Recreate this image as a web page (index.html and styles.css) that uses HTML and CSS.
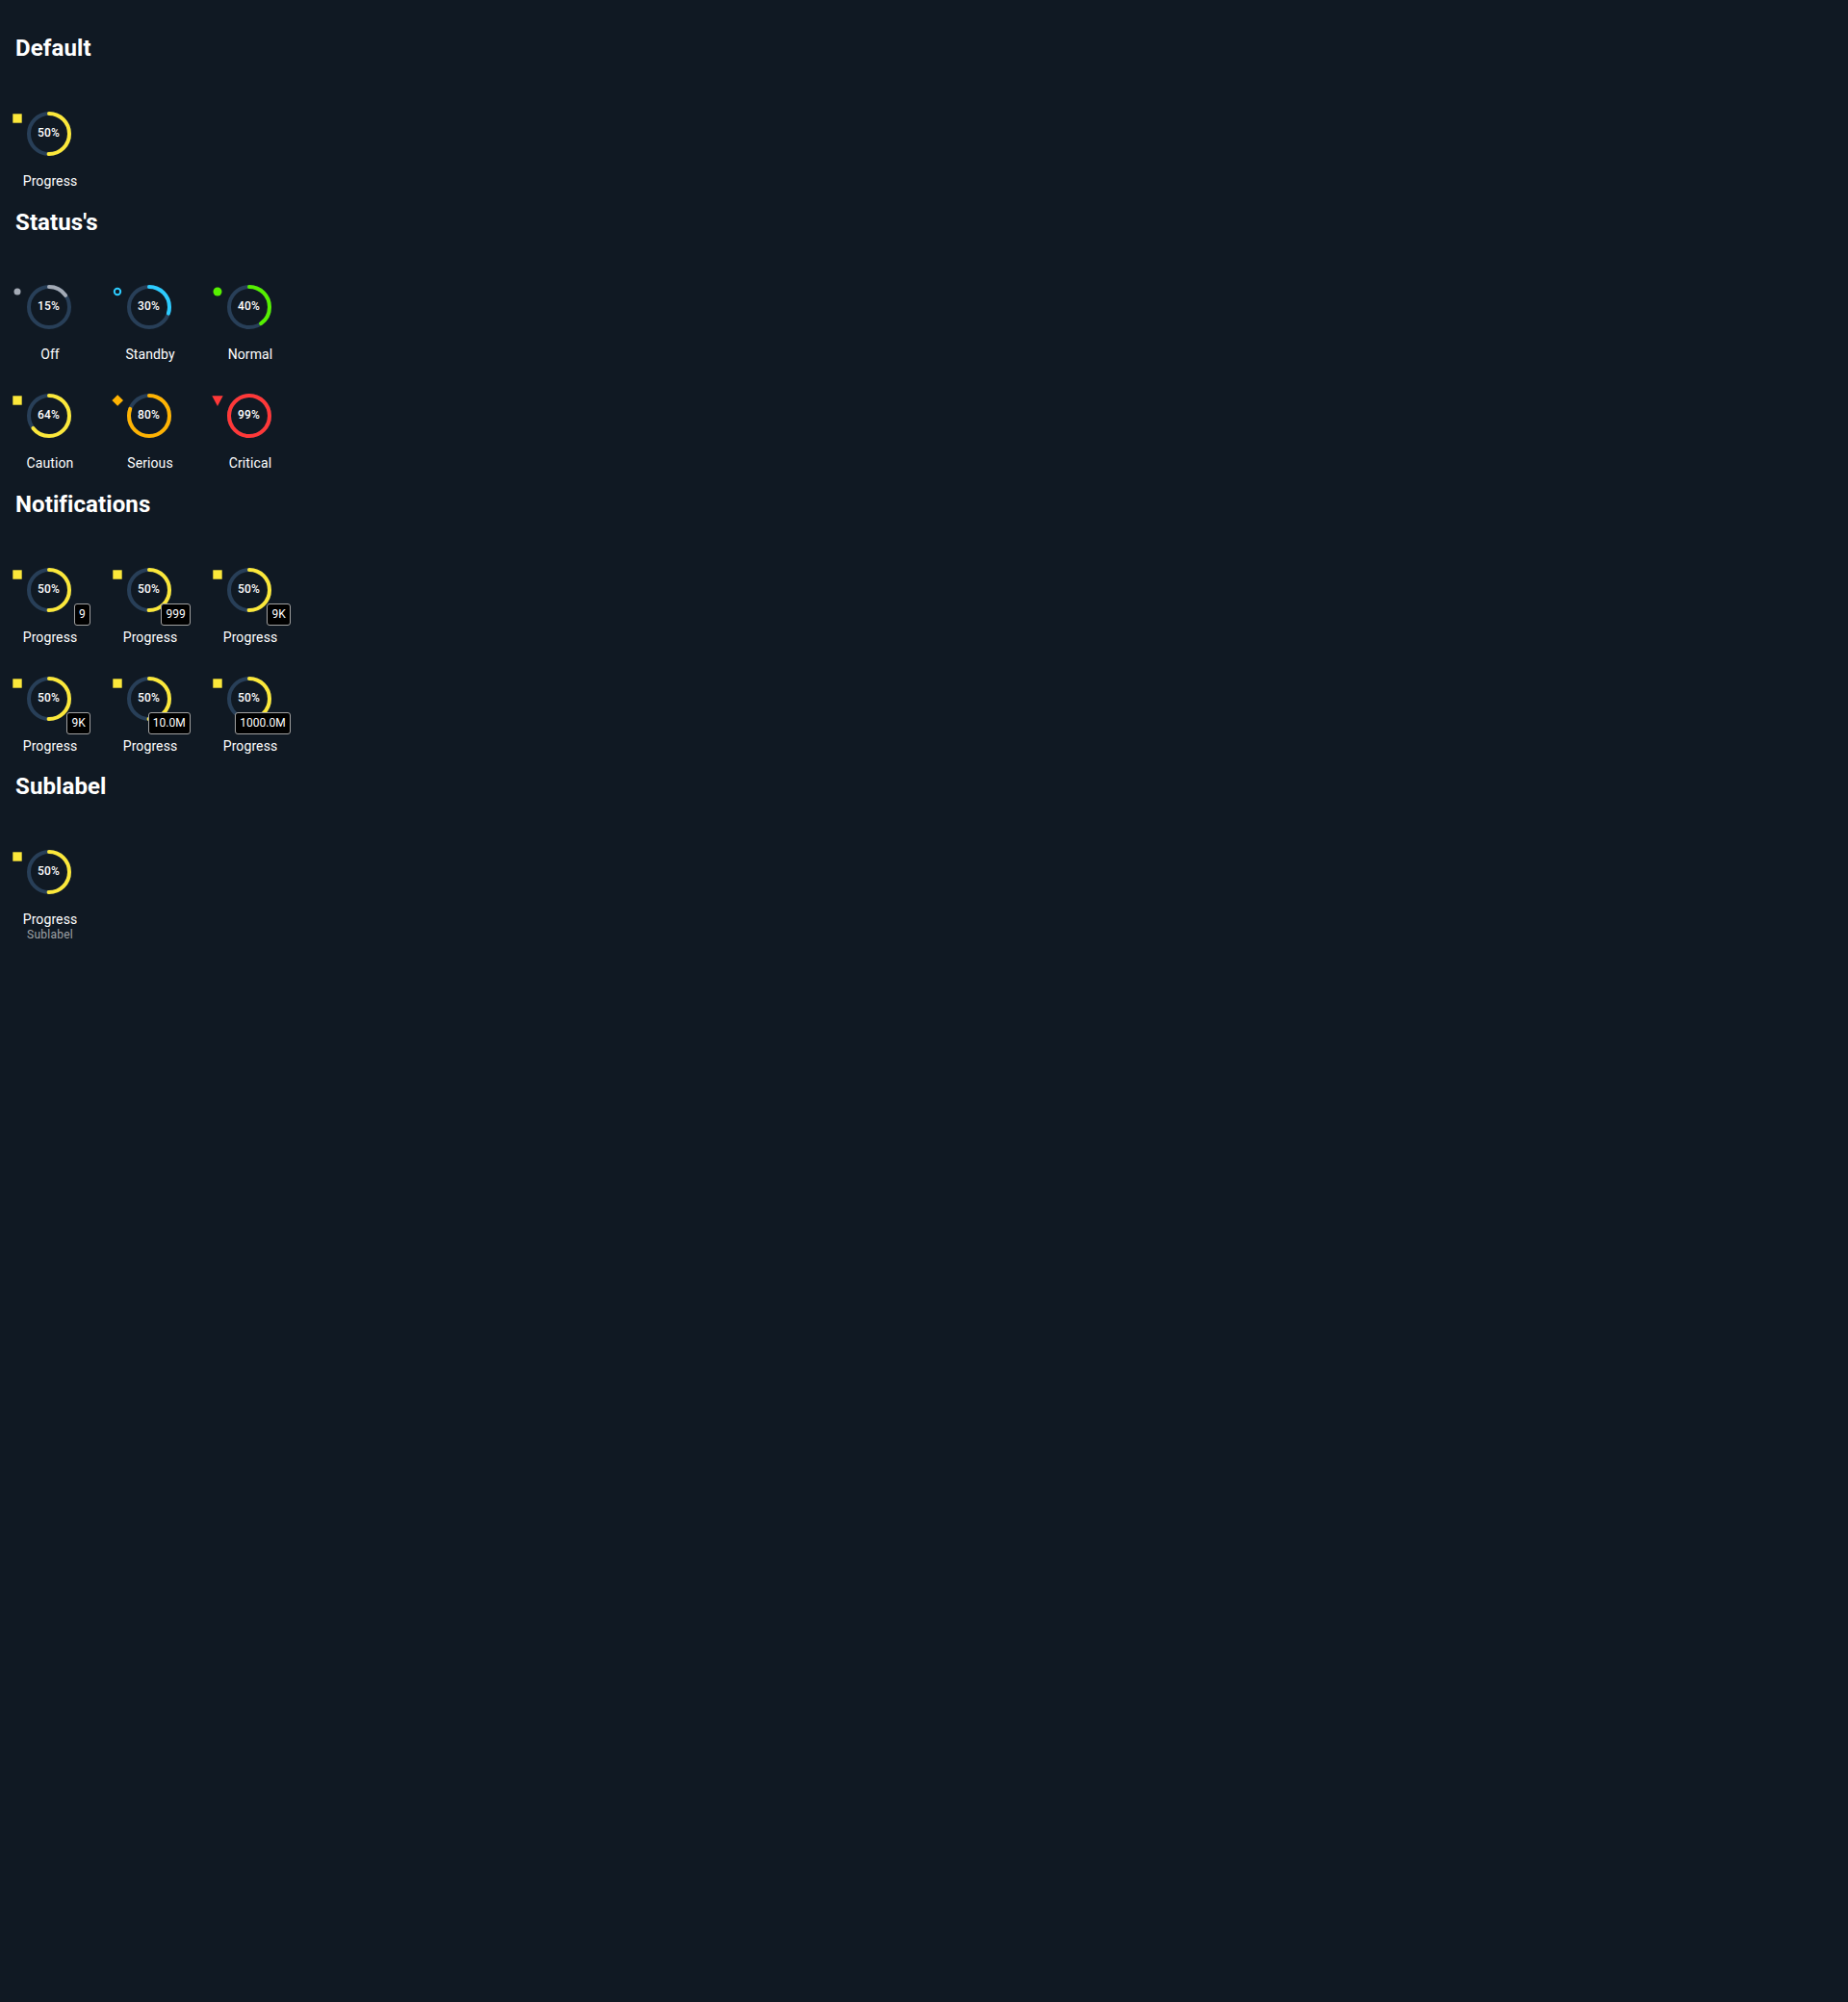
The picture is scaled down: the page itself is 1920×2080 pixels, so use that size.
FILE: index.html
```
<!DOCTYPE html>
<html lang="en">
<head>
<meta charset="utf-8">
<title>Monitoring Progress Icon</title>
<link rel="stylesheet" href="styles.css">
</head>
<body>
<main class="page" id="page"></main>
<script src="main.js"></script>
</body>
</html>
```
FILE: styles.css
```
body {
  margin: 0;
  background: #101923;
  color: #fff;
  font-family: Roboto, "Liberation Sans", sans-serif;
}
.page {
  display: flex;
  flex-direction: column;
  gap: 18.8px;
  padding-top: 36.2px;
}
.heading {
  margin: 0 0 51.6px 16px;
  font-size: 24px;
  line-height: 28px;
  font-weight: 700;
  letter-spacing: 0.1px;
}
.grid {
  display: grid;
  grid-template-columns: repeat(3, 104px);
  row-gap: 31px;
}
.monitor {
  position: relative;
  display: flex;
  flex-direction: column;
  align-items: center;
}
.graphic {
  display: block;
  width: 104px;
  height: 46px;
  margin-bottom: 16px;
  overflow: visible;
}
.ring {
  fill: none;
  stroke-width: 4;
}
.track { stroke: #283f58; }
.arc { stroke: currentColor; stroke-linecap: round; }
.symbol { fill: currentColor; }
.symbol-ring { fill: none; stroke: currentColor; stroke-width: 2; }
.off { color: #a4abb6; }
.standby { color: #2dccff; }
.normal { color: #56f000; }
.caution { color: #fce83a; }
.serious { color: #ffb302; }
.critical { color: #ff3838; }
.percent {
  position: absolute;
  top: 15px;
  left: 27.5px;
  width: 46px;
  font-size: 12px;
  line-height: 14px;
  font-weight: 500;
  letter-spacing: 0.1px;
  text-align: center;
}
.label {
  height: 20px;
  font-size: 14px;
  line-height: 20px;
  letter-spacing: 0.1px;
}
.sublabel {
  margin-top: -2px;
  color: #9fa3a7;
  font-size: 12px;
  line-height: 16px;
  letter-spacing: 0.25px;
}
.badge {
  position: absolute;
  top: 37px;
  right: 10px;
  box-sizing: border-box;
  height: 23px;
  padding: 0 4.3px;
  border: 1px solid #a1a1a1;
  border-radius: 3px;
  background: #000;
  font-size: 12px;
  line-height: 20px;
}
```
FILE: main.js
```
const RADIUS = 21;
const LENGTH = 2 * Math.PI * RADIUS;

const symbols = {
  off: '<circle class="symbol" cx="18" cy="7" r="3.5"/>',
  standby: '<circle class="symbol-ring" cx="18" cy="7" r="3.2"/>',
  normal: '<circle class="symbol" cx="18" cy="7" r="4.5"/>',
  caution: '<rect class="symbol" x="13.3" y="2.3" width="9.4" height="9.4"/>',
  serious: '<path class="symbol" d="M18.2 1.2 24 7l-5.8 5.8L12.4 7z"/>',
  critical: '<path class="symbol" d="M12.3 2.3h11.4L18 12.9z"/>'
};

const progress = { status: 'caution', value: 50, label: 'Progress' };
const sections = [
  ['Default', [progress]],
  ["Status's", [
    { status: 'off', value: 15, label: 'Off' },
    { status: 'standby', value: 30, label: 'Standby' },
    { status: 'normal', value: 40, label: 'Normal' },
    { status: 'caution', value: 64, label: 'Caution' },
    { status: 'serious', value: 80, label: 'Serious' },
    { status: 'critical', value: 99, label: 'Critical' }
  ]],
  ['Notifications', ['9', '999', '9K', '9K', '10.0M', '1000.0M'].map(badge => ({ ...progress, badge }))],
  ['Sublabel', [{ ...progress, sublabel: 'Sublabel' }]]
];

function monitor({ status, value, label, sublabel, badge }) {
  return `<div class="monitor">
    <svg class="graphic ${status}" viewBox="0 0 104 46">
      ${symbols[status]}
      <circle class="ring track" cx="51" cy="23" r="${RADIUS}"/>
      <circle class="ring arc" cx="51" cy="23" r="${RADIUS}" transform="rotate(-90 51 23)" stroke-dasharray="${LENGTH * value / 100} ${LENGTH}"/>
    </svg>
    <span class="percent">${value}%</span>
    <span class="label">${label}</span>
    ${sublabel ? `<span class="sublabel">${sublabel}</span>` : ''}
    ${badge ? `<span class="badge">${badge}</span>` : ''}
  </div>`;
}

document.getElementById('page').innerHTML = sections.map(([title, items]) =>
  `<section><h2 class="heading">${title}</h2><div class="grid">${items.map(monitor).join('')}</div></section>`
).join('');
```
